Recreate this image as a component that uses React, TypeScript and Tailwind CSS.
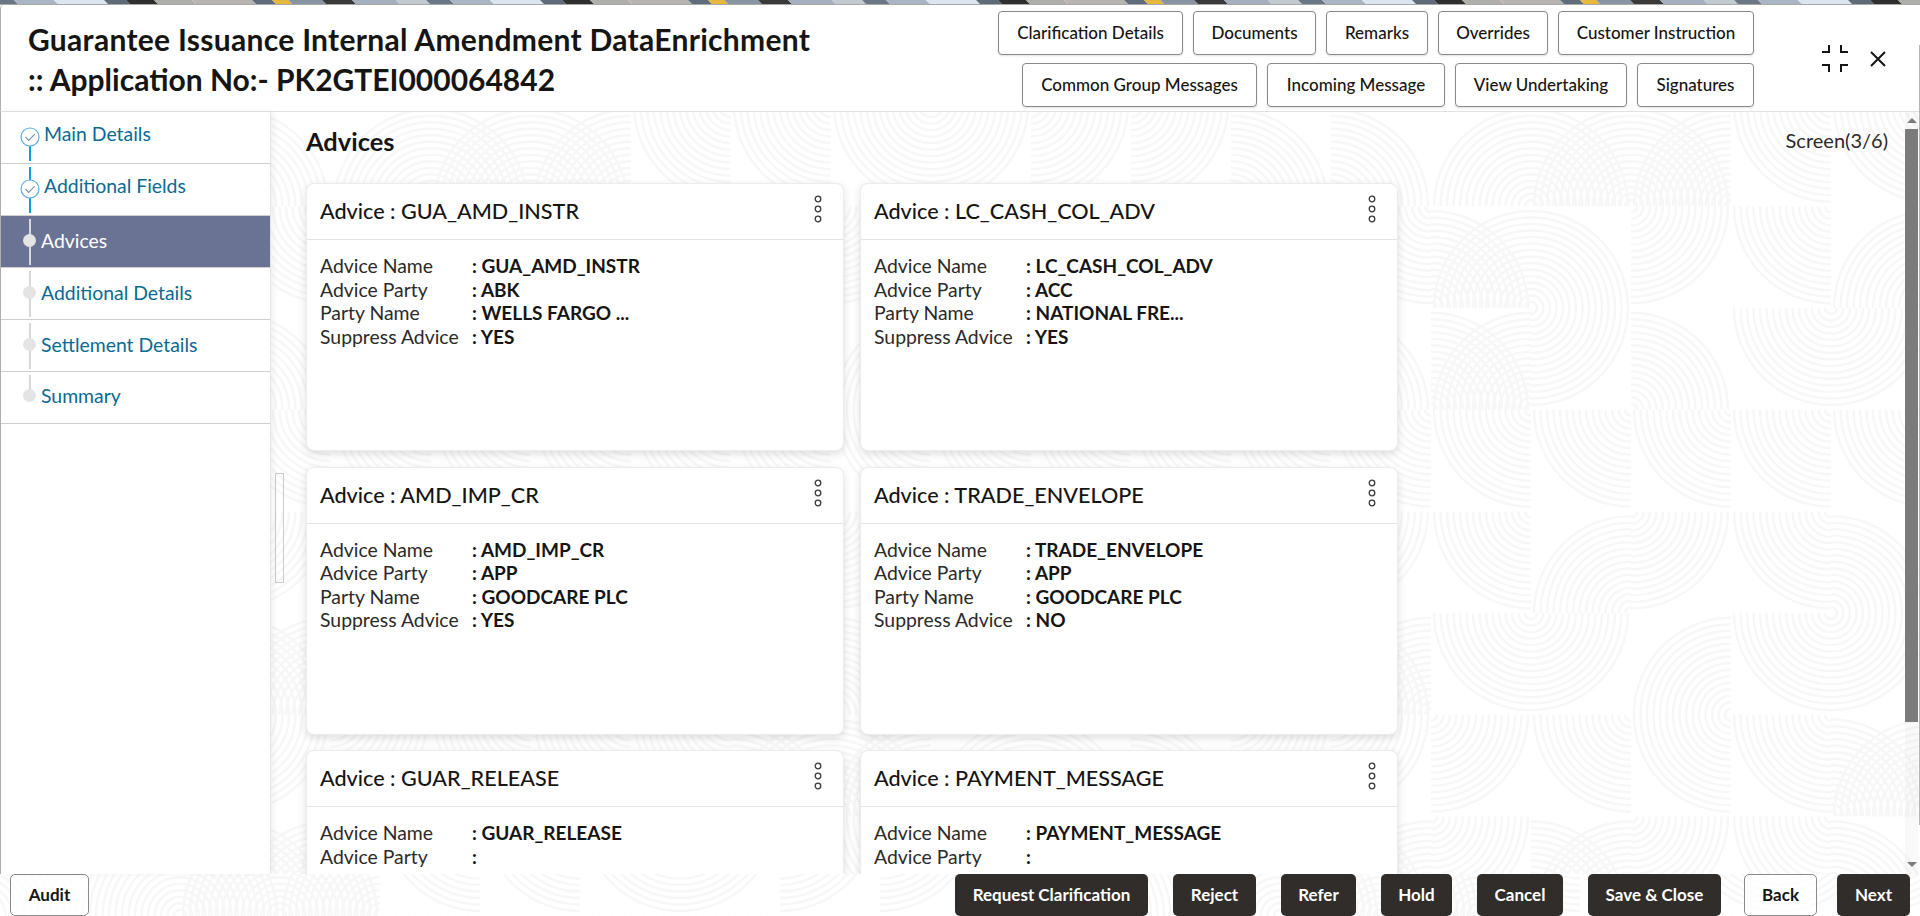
import React from "react";

const STEPS = [
  { label: "Main Details", state: "done" },
  { label: "Additional Fields", state: "done" },
  { label: "Advices", state: "active" },
  { label: "Additional Details", state: "todo" },
  { label: "Settlement Details", state: "todo" },
  { label: "Summary", state: "todo" },
];

const CARDS = [
  { id: "GUA_AMD_INSTR", party: "ABK", name: "WELLS FARGO ...", suppress: "YES" },
  { id: "LC_CASH_COL_ADV", party: "ACC", name: "NATIONAL FRE...", suppress: "YES" },
  { id: "AMD_IMP_CR", party: "APP", name: "GOODCARE PLC", suppress: "YES" },
  { id: "TRADE_ENVELOPE", party: "APP", name: "GOODCARE PLC", suppress: "NO" },
  { id: "GUAR_RELEASE", party: "", name: "", suppress: "" },
  { id: "PAYMENT_MESSAGE", party: "", name: "", suppress: "" },
];

function Fingerprint({ offsetX, offsetY, cols, rows }: { offsetX: number; offsetY: number; cols: number; rows: number }) {
  const paths: string[] = [];
  const tw = 100;
  const th = 101.7;
  const quarter = (x: number, y: number, corner: number) => {
    const cx = corner === 0 || corner === 3 ? x : x + tw;
    const cy = corner === 0 || corner === 1 ? y : y + th;
    const dx = corner === 0 || corner === 3 ? 1 : -1;
    const dy = corner === 0 || corner === 1 ? 1 : -1;
    const sweep = dx * dy > 0 ? 1 : 0;
    let d = "";
    for (let r = 6; r <= 99; r += 6.5) {
      d += `M${(cx + dx * r).toFixed(1)} ${cy.toFixed(1)}A${r} ${r} 0 0 ${sweep} ${cx.toFixed(1)} ${(cy + dy * r).toFixed(1)}`;
    }
    return d;
  };
  for (let j = 0; j < rows; j++) {
    for (let i = 0; i < cols; i++) {
      const h = (i * 7 + j * 13 + i * j * 5 + 3) % 11;
      const x = offsetX + i * tw;
      const y = offsetY + j * th;
      paths.push(quarter(x, y, h % 4));
      if (h === 6 || h === 2) paths.push(quarter(x, y, (h + 1) % 4));
    }
  }
  return (
    <svg className="absolute inset-0 w-full h-full" aria-hidden="true">
      <path d={paths.join("")} fill="none" stroke="#f7f7f7" strokeWidth="2.4" />
    </svg>
  );
}

function TopStrip() {
  const colors = ["#6a7785", "#a9b6c6", "#dbe5f2", "#5d6a78", "#2f2f30", "#b0aea9", "#b8b5b0", "#5f6c7a", "#e6b93c", "#8794a3", "#3a3a3b", "#a4b0bf", "#c3c9d1"];
  const widths = [24, 40, 50, 22, 28, 38, 60, 20, 16, 34, 30, 44, 30];
  const polys: React.ReactElement[] = [];
  let x = -10;
  let i = 0;
  while (x < 1930) {
    const w = widths[i % widths.length];
    polys.push(<polygon key={i} points={`${x},0 ${x + w},0 ${x + w + 5},5 ${x + 5},5`} fill={colors[i % colors.length]} />);
    x += w;
    i++;
  }
  return (
    <svg className="block w-full h-[4px] shrink-0" viewBox="0 0 1920 4" preserveAspectRatio="none" aria-hidden="true">
      {polys}
    </svg>
  );
}

function StepMarker({ state, index }: { state: string; index: number }) {
  const blue = "#0f9fd8";
  const done = state === "done";
  const lineColor = done ? blue : "#d8d8d8";
  return (
    <svg className="absolute left-0 top-0" width="44" height="52" aria-hidden="true">
      {index > 0 && <line x1="29" x2="29" y1="3" y2="26" stroke={lineColor} strokeWidth="2" />}
      {index < STEPS.length - 1 && <line x1="29" x2="29" y1="26" y2="49" stroke={lineColor} strokeWidth="2" />}
      {done ? (
        <g>
          <circle cx="29" cy="25" r="9" fill="#fff" stroke="#5aaee6" strokeWidth="1.2" />
          <path d="M24.5 25l3.2 3.4 6-6.2" fill="none" stroke="#7a93a8" strokeWidth="1.1" />
        </g>
      ) : (
        <circle cx="28.5" cy={index === 5 ? 23.5 : 24.5} r="6.5" fill="#e4e4e4" />
      )}
    </svg>
  );
}

function Sidebar() {
  return (
    <aside className="w-[270px] shrink-0 bg-white border-r border-[#e4e4e4] shadow-[3px_0_6px_rgba(0,0,0,0.05)] z-10">
      {STEPS.map((s, i) => {
        const active = s.state === "active";
        const done = s.state === "done";
        const last = i === STEPS.length - 1;
        return (
          <div
            key={s.label}
            className={`relative h-[52px] border-b border-[#cfcfcf] flex text-[19.4px] leading-[24px] ${active ? "bg-[#6a7394] text-white items-center pl-[40px] pb-[1px]" : "text-[#0b6a92]"} ${done ? "pl-[43px] pt-[10px]" : ""} ${s.state === "todo" ? "pl-[40px] items-center" : ""} ${last ? "pb-[3px]" : s.state === "todo" ? "pb-[2px]" : ""}`}
          >
            <StepMarker state={s.state} index={i} />
            <span className="relative">{s.label}</span>
          </div>
        );
      })}
    </aside>
  );
}

function Kebab() {
  return (
    <svg width="10" height="30" viewBox="0 0 10 30" className="shrink-0 mt-[-5px]" aria-hidden="true">
      <circle cx="5" cy="5" r="2.8" fill="none" stroke="#3a3a3a" strokeWidth="1.3" />
      <circle cx="5" cy="15" r="2.8" fill="none" stroke="#3a3a3a" strokeWidth="1.3" />
      <circle cx="5" cy="25" r="2.8" fill="none" stroke="#3a3a3a" strokeWidth="1.3" />
    </svg>
  );
}

function Row({ label, value }: { label: string; value: string }) {
  return (
    <div className="flex h-[23.5px] items-center">
      <span className="w-[152px] shrink-0 text-[19.4px] text-[#2c2a28]">{label}</span>
      <span className="text-[19px] font-bold text-[#161513]">: {value}</span>
    </div>
  );
}

function Card({ c }: { c: (typeof CARDS)[number] }) {
  return (
    <div className="h-[268px] bg-white rounded-[8px] border border-[#ececec] shadow-[0_3px_8px_rgba(0,0,0,0.13)]">
      <div className="h-[56px] border-b border-[#e4e4e4] flex items-center justify-between pl-[13px] pr-[20px]">
        <span className="text-[21.6px] font-medium text-[#161513]">Advice : {c.id}</span>
        <Kebab />
      </div>
      <div className="pl-[13px] pt-[14px] leading-[23px]">
        <Row label="Advice Name" value={c.id} />
        <Row label="Advice Party" value={c.party} />
        {c.name && <Row label="Party Name" value={c.name} />}
        {c.suppress && <Row label="Suppress Advice" value={c.suppress} />}
      </div>
    </div>
  );
}

function HeaderButton({ w, children }: { w: string; children: React.ReactNode }) {
  return (
    <button className={`${w} h-[44px] rounded-[4px] border border-[#8a8a8a] bg-white text-[17px] font-medium text-[#161513] shadow-[0_1px_2px_rgba(0,0,0,0.12)] whitespace-nowrap`}>
      {children}
    </button>
  );
}

function FootButton({ w, light, children }: { w: string; light?: boolean; children: React.ReactNode }) {
  return (
    <button
      className={`${w} h-[42px] rounded-[5px] text-[17px] font-bold whitespace-nowrap ${light ? "bg-white/70 border border-[#8a8a8a] text-[#161513]" : "bg-[#312d2a] text-white"}`}
    >
      {children}
    </button>
  );
}

export default function App() {
  return (
    <div className="relative h-[916px] w-full overflow-hidden bg-white flex flex-col font-['Lato','Liberation_Sans',sans-serif] text-[#161513]">
      <TopStrip />
      <div className="h-px shrink-0 bg-[#a9a9a9]" />
      <header className="h-[107px] shrink-0 flex justify-between bg-white border-b border-[#e2e2e2] border-l border-l-[#b0b0b0] rounded-tl-[4px]">
        <h1 className="pl-[27px] pt-[15px] text-[30px] leading-[39.5px] font-bold text-[#161513]">
          <span className="tracking-[0.3px]">Guarantee Issuance Internal Amendment DataEnrichment</span>
          <br />
          <span>:: Application No:- PK2GTEI000064842</span>
        </h1>
        <div className="flex items-center pb-[2px]">
          <div className="flex flex-col items-end gap-[8px] pt-[3px]">
            <div className="flex gap-[10px]">
              <HeaderButton w="w-[185px]">Clarification Details</HeaderButton>
              <HeaderButton w="w-[123px]">Documents</HeaderButton>
              <HeaderButton w="w-[102px]">Remarks</HeaderButton>
              <HeaderButton w="w-[110px]">Overrides</HeaderButton>
              <HeaderButton w="w-[196px]">Customer Instruction</HeaderButton>
            </div>
            <div className="flex gap-[10px]">
              <HeaderButton w="w-[235px]">Common Group Messages</HeaderButton>
              <HeaderButton w="w-[178px]">Incoming Message</HeaderButton>
              <HeaderButton w="w-[172px]">View Undertaking</HeaderButton>
              <HeaderButton w="w-[117px]">Signatures</HeaderButton>
            </div>
          </div>
          <svg className="ml-[68px] mt-[3px]" width="26" height="27" viewBox="0 0 26 27" fill="none" stroke="#161513" strokeWidth="2" aria-hidden="true">
            <path d="M0 7h7V0M19 0v7h7M0 20h7v7M26 20h-7v7" />
          </svg>
          <svg className="ml-[22px] mr-[34px] mt-[3px]" width="16" height="16" viewBox="0 0 16 16" fill="none" stroke="#161513" strokeWidth="2" aria-hidden="true">
            <path d="M1 1l14 14M15 1L1 15" />
          </svg>
        </div>
      </header>

      <div className="flex-1 min-h-0 flex border-l border-[#b0b0b0]">
        <Sidebar />
        <main className="relative flex-1 min-w-0 overflow-hidden bg-white flex">
          <Fingerprint offsetX={-40} offsetY={-7.4} cols={18} rows={9} />
          <div className="relative flex-1 min-w-0 pl-[35px]">
            <div className="flex items-center justify-between h-[71px] pb-[13px]">
              <h2 className="text-[25.4px] font-bold text-[#161513]">Advices</h2>
              <span className="text-[20px] text-[#2c2a28] pr-[17px] mb-[2px]">Screen(3/6)</span>
            </div>
            <div className="grid grid-cols-[538px_538px] gap-x-[16px] gap-y-[15.5px]">
              {CARDS.map((c) => (
                <Card key={c.id} c={c} />
              ))}
            </div>
          </div>
          <div className="relative w-[13px] mr-[2px] shrink-0 bg-[rgba(0,0,0,0.025)] flex flex-col items-center">
            <div className="h-[17px] flex items-center">
              <div className="border-x-[5px] border-x-transparent border-b-[5px] border-b-[#7a7a7a]" />
            </div>
            <div className="h-[593px] w-full bg-[#7b7b7b]" />
            <div className="flex-1 flex items-end pb-[7px]">
              <div className="border-x-[5px] border-x-transparent border-t-[5px] border-t-[#7a7a7a]" />
            </div>
          </div>
          <div className="absolute left-[4px] top-[361px] w-[9px] h-[110px] border border-[#cccccc]" />
        </main>
      </div>

      <footer className="relative h-[42px] shrink-0 bg-white flex justify-between pl-[10px] pr-[10px]">
        <Fingerprint offsetX={-20} offsetY={-60} cols={20} rows={2} />
        <FootButton w="relative w-[79px]" light>
          Audit
        </FootButton>
        <div className="relative flex gap-[25px]">
          <FootButton w="w-[193px]">Request Clarification</FootButton>
          <FootButton w="w-[83px]">Reject</FootButton>
          <FootButton w="w-[75px]">Refer</FootButton>
          <FootButton w="w-[71px]">Hold</FootButton>
          <FootButton w="w-[86px]">Cancel</FootButton>
          <FootButton w="w-[133px]">Save &amp; Close</FootButton>
          <div className="flex gap-[20px] ml-[-2px]">
            <FootButton w="w-[73px]" light>
              Back
            </FootButton>
            <FootButton w="w-[73px]">Next</FootButton>
          </div>
        </div>
      </footer>
      <div className="absolute right-0 top-[45px] h-[780px] w-px bg-[#b5b5b5]" />
    </div>
  );
}
